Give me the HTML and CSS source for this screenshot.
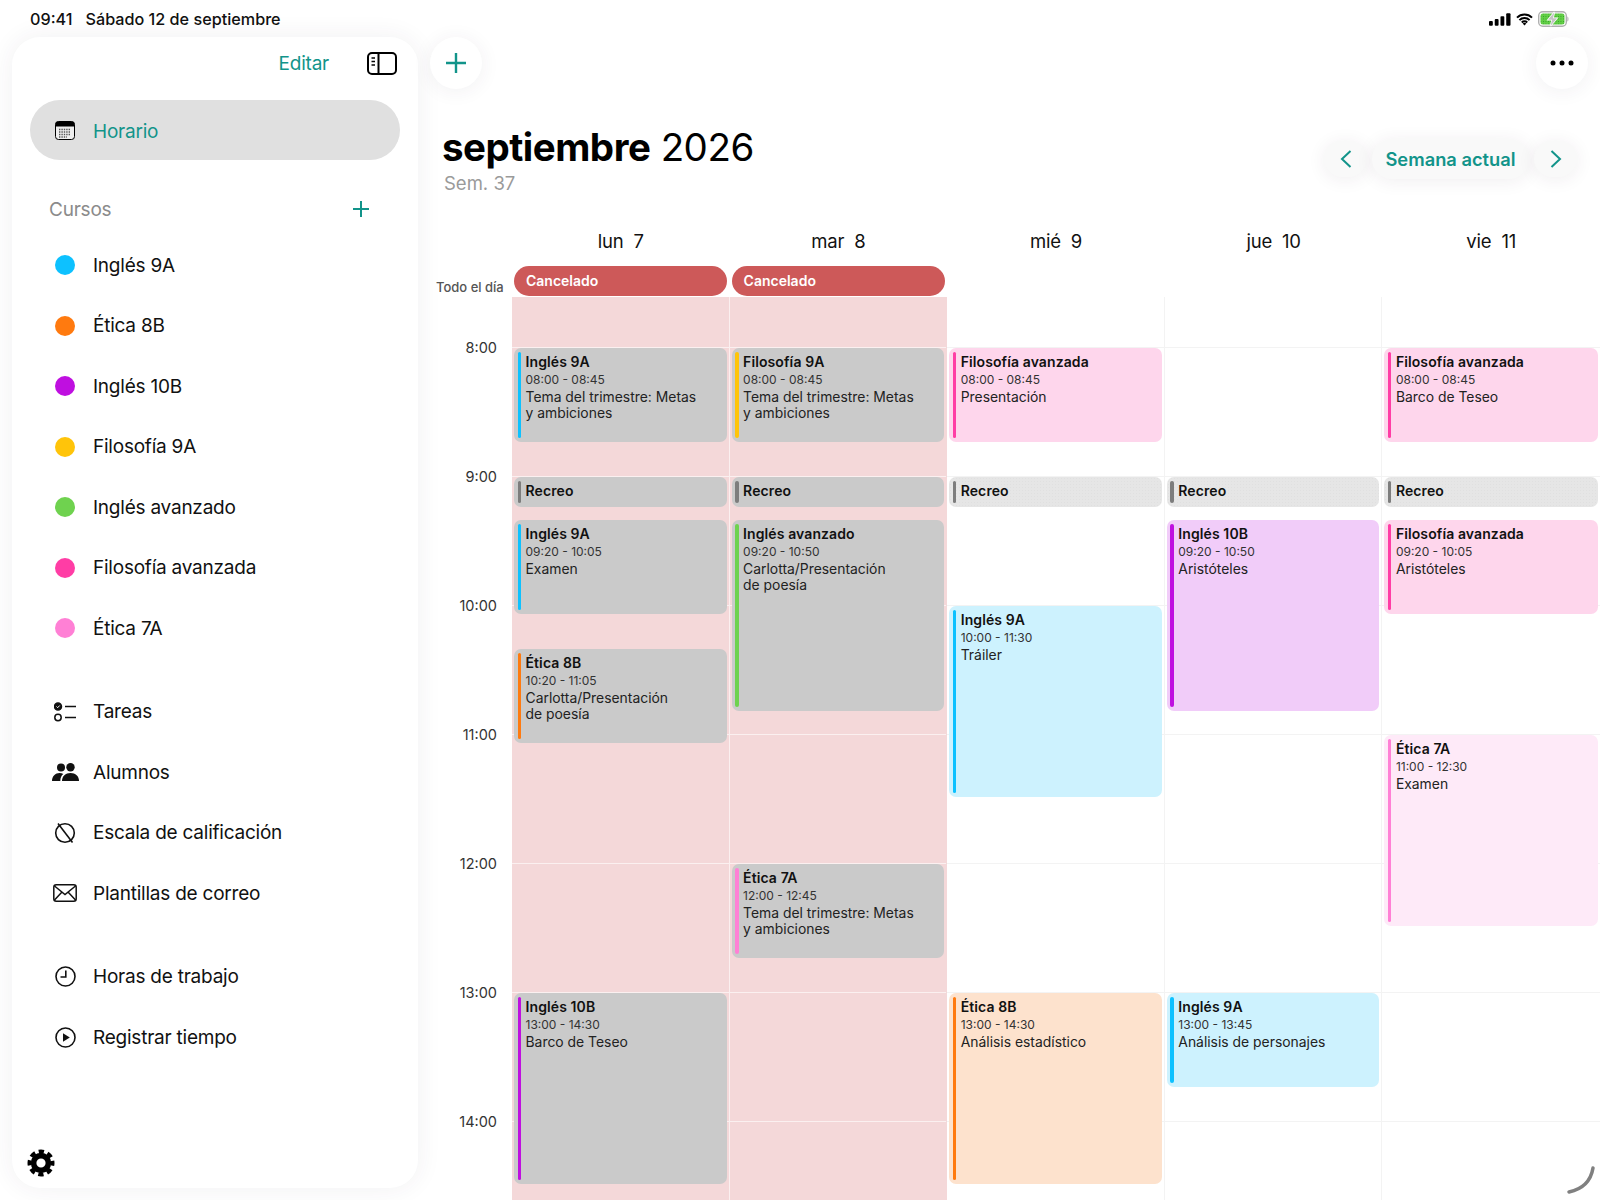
FILE: index.html
```html
<!DOCTYPE html>
<html lang="es">
<head>
    <meta charset="UTF-8">
    <meta name="viewport" content="width=device-width, initial-scale=1.0">
    <title>Horario</title>
    <link rel="stylesheet" href="styles.css">
</head>
<body>
    <div class="status-bar">
        <span class="clock">09:41</span>
        <span class="date">Sábado 12 de septiembre</span>
        <div class="status-icons">
            <svg width="22" height="13" viewBox="0 0 23 13"><rect x="0" y="8" width="4" height="5" rx="1"/><rect x="6" y="6" width="4" height="7" rx="1"/><rect x="12" y="3" width="4" height="10" rx="1"/><rect x="18" y="0" width="4.5" height="13" rx="1"/></svg>
            <svg width="17" height="13" viewBox="0 0 17 13"><path d="M1 4.6a10.6 10.6 0 0 1 15 0M3.4 7.1a7.2 7.2 0 0 1 10.2 0M5.8 9.5a3.8 3.8 0 0 1 5.4 0" fill="none" stroke="#000" stroke-width="2"/><path d="M6.7 10.6a2.5 2.5 0 0 1 3.6 0L8.5 12.6z"/></svg>
            <svg width="32" height="16" viewBox="0 0 32 16">
                <pattern id="cells" width="2.5" height="2.5" patternUnits="userSpaceOnUse"><rect width="2.5" height="2.5" fill="#62cf45"/><rect width="0.9" height="0.9" fill="#2f9a2a"/></pattern>
                <rect x="0.7" y="0.7" width="27.6" height="14.6" rx="4" fill="#fff" stroke="#b0b0b0" stroke-width="1.4"/>
                <rect x="2.5" y="2.5" width="24" height="11" rx="2.5" fill="url(#cells)"/>
                <path d="M29.5 5.5c1.2.4 1.2 4.600 0 5z" fill="#999"/>
                <path d="M16.500 1 10 8.800h4l-1.500 6.200 6.500-7.800h-4z" fill="#c4c4c4" stroke="#fff" stroke-width="1.400" paint-order="stroke"/>
            </svg>
        </div>
    </div>

    <div class="app">
        <aside class="sidebar">
            <div class="side-top">
                <span class="edit">Editar</span>
                <svg width="30" height="23" viewBox="0 0 30 23" fill="none" stroke="#000" stroke-width="2"><rect x="1" y="1" width="28" height="21" rx="4"/><path d="M11.500 1v21"/><path d="M4.500 6h3.500M4.500 9.500h3.500M4.500 13h3.500" stroke-width="1.500"/></svg>
            </div>

            <div class="nav-pill">
                <span class="slot">
                    <svg width="20" height="19" viewBox="0 0 20 19"><rect x="0.500" y="0.500" width="19" height="18" rx="3" fill="#eee" stroke="#000"/><path d="M3 0.500h14a2.500 2.500 0 0 1 2.500 2.500v2.500H0.500V3A2.500 2.500 0 0 1 3 0.500z"/><path d="M4 8.500h12M4 11h12M4 13.500h12M4 16h8" stroke="#555" stroke-width="1.400" stroke-dasharray="1.400 1"/></svg>
                </span>
                <span>Horario</span>
            </div>

            <div class="section-head">
                <span>Cursos</span>
                <svg width="18" height="18" viewBox="0 0 18 18" stroke="#12948a" stroke-width="2"><path d="M9 1v16M1 9h16"/></svg>
            </div>

            <ul class="side-list">
                <li><span class="slot"><i class="dot c-ing9a"></i></span>Inglés 9A</li>
                <li><span class="slot"><i class="dot c-eti8b"></i></span>Ética 8B</li>
                <li><span class="slot"><i class="dot c-ing10b"></i></span>Inglés 10B</li>
                <li><span class="slot"><i class="dot c-fil9a"></i></span>Filosofía 9A</li>
                <li><span class="slot"><i class="dot c-ingav"></i></span>Inglés avanzado</li>
                <li><span class="slot"><i class="dot c-filav"></i></span>Filosofía avanzada</li>
                <li><span class="slot"><i class="dot c-eti7a"></i></span>Ética 7A</li>
            </ul>

            <ul class="side-list spaced">
                <li>
                    <span class="slot">
                        <svg width="23" height="20" viewBox="0 0 23 20" fill="none" stroke="#111" stroke-width="1.500"><circle cx="4" cy="4.500" r="3.500" fill="#111"/><path d="M2.500 4.500l1.200 1.200 2-2.200" stroke="#fff" stroke-width="1"/><circle cx="4" cy="15.500" r="3.200"/><path d="M11 4.500h11M11 15.500h11"/></svg>
                    </span>Tareas
                </li>
                <li>
                    <span class="slot">
                        <svg width="27" height="18" viewBox="0 0 27 18" fill="#111"><circle cx="9" cy="4.500" r="4"/><circle cx="18.500" cy="4.200" r="4.200"/><path d="M0 18c0-5 3.500-8 7.500-8 1.500 0 2.800.4 3.800 1-2 1.500-3 4-3 7z"/><path d="M10 18c0-5 3.500-8 8.500-8s8.500 3 8.500 8z"/></svg>
                    </span>Alumnos
                </li>
                <li>
                    <span class="slot">
                        <svg width="22" height="22" viewBox="0 0 22 22" fill="none" stroke="#111" stroke-width="1.600"><circle cx="11" cy="11" r="9.300"/><path d="M4 1.500l14.500 19"/></svg>
                    </span>Escala de calificación
                </li>
                <li>
                    <span class="slot">
                        <svg width="24" height="18" viewBox="0 0 24 18" fill="none" stroke="#111" stroke-width="1.500"><rect x="0.800" y="0.800" width="22.400" height="16.400" rx="2.500"/><path d="M1.500 2l10.500 8.500L22.500 2M1.500 16l7.500-8M22.500 16l-7.500-8"/></svg>
                    </span>Plantillas de correo
                </li>
            </ul>

            <ul class="side-list spaced">
                <li>
                    <span class="slot">
                        <svg width="21" height="21" viewBox="0 0 21 21" fill="none" stroke="#111" stroke-width="1.600"><circle cx="10.500" cy="10.500" r="9.500"/><path d="M10.800 4.500v6.500H5.500"/></svg>
                    </span>Horas de trabajo
                </li>
                <li>
                    <span class="slot">
                        <svg width="21" height="21" viewBox="0 0 21 21" fill="none" stroke="#111" stroke-width="1.600"><circle cx="10.500" cy="10.500" r="9.500"/><path d="M8 6.300l6.800 4.200L8 14.700z" fill="#111" stroke="none"/></svg>
                    </span>Registrar tiempo
                </li>
            </ul>

            <svg class="gear" width="28" height="28" viewBox="0 0 28 28" fill="none" stroke="#000"><circle cx="14" cy="14" r="7.400" stroke-width="5.600"/><circle cx="14" cy="14" r="11.500" stroke-width="4" stroke-dasharray="5.300 3.730" stroke-dashoffset="2.650"/></svg>
        </aside>

        <main class="main">
            <div class="toolbar">
                <button class="round-btn">
                    <svg width="22" height="22" viewBox="0 0 22 22" stroke="#12948a" stroke-width="2.400"><path d="M11 1v20M1 11h20"/></svg>
                </button>
                <button class="round-btn">
                    <svg width="24" height="6" viewBox="0 0 24 6" fill="#000"><circle cx="3" cy="3" r="2.500"/><circle cx="12" cy="3" r="2.500"/><circle cx="21" cy="3" r="2.500"/></svg>
                </button>
            </div>

            <header class="month-head">
                <div>
                    <h1><b>septiembre</b> 2026</h1>
                    <p class="week-no">Sem. 37</p>
                </div>
                <div class="week-nav">
                    <button class="arrow-btn"><svg width="12" height="18" viewBox="0 0 12 18" fill="none" stroke="#12948a" stroke-width="2"><path d="M10.500 1L2 9l8.500 8"/></svg></button>
                    <button class="week-btn">Semana actual</button>
                    <button class="arrow-btn"><svg width="12" height="18" viewBox="0 0 12 18" fill="none" stroke="#12948a" stroke-width="2"><path d="M1.500 1L10 9l-8.500 8"/></svg></button>
                </div>
            </header>

            <div class="week-head">
                <span></span>
                <span>lun&nbsp; 7</span>
                <span>mar&nbsp; 8</span>
                <span>mié&nbsp; 9</span>
                <span>jue&nbsp; 10</span>
                <span>vie&nbsp; 11</span>
            </div>

            <div class="all-day">
                <span class="all-day-label">Todo el día</span>
                <div class="all-day-cell"><span class="cancel-pill">Cancelado</span></div>
                <div class="all-day-cell"><span class="cancel-pill">Cancelado</span></div>
                <div class="all-day-cell"></div>
                <div class="all-day-cell"></div>
                <div class="all-day-cell"></div>
            </div>

            <div class="week-grid">
                <div class="hours">
                    <span>8:00</span><span>9:00</span><span>10:00</span><span>11:00</span><span>12:00</span><span>13:00</span><span>14:00</span>
                </div>

                <div class="day cancelled">
                    <div class="slots">
                        <div class="ev c-ing9a" style="grid-row: 1 / 10"><b>Inglés 9A</b><small>08:00 - 08:45</small><p>Tema del trimestre: Metas<br>y ambiciones</p></div>
                        <div class="ev break" style="grid-row: 13 / 16"><b>Recreo</b></div>
                        <div class="ev c-ing9a" style="grid-row: 17 / 26"><b>Inglés 9A</b><small>09:20 - 10:05</small><p>Examen</p></div>
                        <div class="ev c-eti8b" style="grid-row: 29 / 38"><b>Ética 8B</b><small>10:20 - 11:05</small><p>Carlotta/Presentación<br>de poesía</p></div>
                        <div class="ev c-ing10b" style="grid-row: 61 / 79"><b>Inglés 10B</b><small>13:00 - 14:30</small><p>Barco de Teseo</p></div>
                    </div>
                </div>

                <div class="day cancelled">
                    <div class="slots">
                        <div class="ev c-fil9a" style="grid-row: 1 / 10"><b>Filosofía 9A</b><small>08:00 - 08:45</small><p>Tema del trimestre: Metas<br>y ambiciones</p></div>
                        <div class="ev break" style="grid-row: 13 / 16"><b>Recreo</b></div>
                        <div class="ev c-ingav" style="grid-row: 17 / 35"><b>Inglés avanzado</b><small>09:20 - 10:50</small><p>Carlotta/Presentación<br>de poesía</p></div>
                        <div class="ev c-eti7a" style="grid-row: 49 / 58"><b>Ética 7A</b><small>12:00 - 12:45</small><p>Tema del trimestre: Metas<br>y ambiciones</p></div>
                    </div>
                </div>

                <div class="day">
                    <div class="slots">
                        <div class="ev c-filav" style="grid-row: 1 / 10"><b>Filosofía avanzada</b><small>08:00 - 08:45</small><p>Presentación</p></div>
                        <div class="ev break" style="grid-row: 13 / 16"><b>Recreo</b></div>
                        <div class="ev c-ing9a" style="grid-row: 25 / 43"><b>Inglés 9A</b><small>10:00 - 11:30</small><p>Tráiler</p></div>
                        <div class="ev c-eti8b" style="grid-row: 61 / 79"><b>Ética 8B</b><small>13:00 - 14:30</small><p>Análisis estadístico</p></div>
                    </div>
                </div>

                <div class="day">
                    <div class="slots">
                        <div class="ev break" style="grid-row: 13 / 16"><b>Recreo</b></div>
                        <div class="ev c-ing10b" style="grid-row: 17 / 35"><b>Inglés 10B</b><small>09:20 - 10:50</small><p>Aristóteles</p></div>
                        <div class="ev c-ing9a" style="grid-row: 61 / 70"><b>Inglés 9A</b><small>13:00 - 13:45</small><p>Análisis de personajes</p></div>
                    </div>
                </div>

                <div class="day">
                    <div class="slots">
                        <div class="ev c-filav" style="grid-row: 1 / 10"><b>Filosofía avanzada</b><small>08:00 - 08:45</small><p>Barco de Teseo</p></div>
                        <div class="ev break" style="grid-row: 13 / 16"><b>Recreo</b></div>
                        <div class="ev c-filav" style="grid-row: 17 / 26"><b>Filosofía avanzada</b><small>09:20 - 10:05</small><p>Aristóteles</p></div>
                        <div class="ev c-eti7a" style="grid-row: 37 / 55"><b>Ética 7A</b><small>11:00 - 12:30</small><p>Examen</p></div>
                    </div>
                </div>
            </div>
        </main>
    </div>

    <svg class="corner" width="32" height="30" viewBox="0 0 32 30" fill="none" stroke="#808080" stroke-width="3.500" stroke-linecap="round"><path d="M28 3C26 15 18 24 4 27"/></svg>
</body>
</html>
```

FILE: styles.css
```css
* {
    box-sizing: border-box;
}

html, body {
    height: 100%;
}

body {
    margin: 0;
    height: 1200px;
    overflow: hidden;
    position: relative;
    display: flex;
    flex-direction: column;
    background: #fff;
    color: #111;
    font-family: Inter, "Liberation Sans", sans-serif;
}

button {
    border: none;
    font-family: inherit;
    padding: 0;
}

/* colores de los cursos */
.c-ing9a { --accent: #0dc1ff; --tint: #cdf2fe; }
.c-eti8b { --accent: #ff7a0f; --tint: #fde2cd; }
.c-ing10b { --accent: #bf0fe0; --tint: #f1ccf9; }
.c-fil9a { --accent: #ffc40a; --tint: #fff0c4; }
.c-ingav { --accent: #6fd24f; --tint: #dcf4d4; }
.c-filav { --accent: #ff3da5; --tint: #fed6ec; }
.c-eti7a { --accent: #ff80d5; --tint: #feeaf8; }

.status-bar {
    height: 37px;
    flex: none;
    display: flex;
    align-items: center;
    padding: 1px 30px 0;
    font-size: 16.2px;
    font-weight: 500;
}

.date {
    margin-left: 13px;
}

.status-icons {
    margin-left: auto;
    display: flex;
    align-items: center;
    gap: 5px;
}

.app {
    flex: 1;
    display: flex;
    min-height: 0;
}

/* barra lateral */
.sidebar {
    width: 406px;
    flex: none;
    margin: 0 12px 12px;
    border-radius: 28px;
    background: #fff;
    box-shadow: 0 0 26px rgba(60, 40, 70, 0.07);
    display: flex;
    flex-direction: column;
    font-size: 19px;
    letter-spacing: -0.23px;
}

.side-top {
    height: 52px;
    flex: none;
    display: flex;
    align-items: center;
    justify-content: flex-end;
    gap: 38px;
    padding-right: 21px;
}

.edit {
    color: #12948a;
}

.nav-pill {
    height: 60px;
    flex: none;
    margin: 11px 18px 0;
    padding-left: 20px;
    border-radius: 30px;
    background: #e0e0e0;
    color: #12948a;
    display: flex;
    align-items: center;
    gap: 13px;
}

.nav-pill span:last-child {
    padding-top: 2px;
}

.slot {
    width: 30px;
    flex: none;
    display: flex;
    align-items: center;
    justify-content: center;
}

.section-head {
    height: 30px;
    flex: none;
    margin-top: 34px;
    margin-bottom: 1px;
    padding: 0 48px 0 37px;
    display: flex;
    align-items: center;
    justify-content: space-between;
    color: #8b8b8b;
}

.side-list {
    list-style: none;
    margin: 10px 0 0;
    padding: 0;
}

.side-list.spaced {
    margin-top: 23px;
}

.side-list li {
    height: 60.5px;
    padding-left: 38px;
    display: flex;
    align-items: center;
    gap: 13px;
}

.dot {
    width: 20px;
    height: 20px;
    border-radius: 50%;
    background: var(--accent);
}

.gear {
    margin: auto 0 11px 15px;
}

/* zona principal */
.main {
    flex: 1;
    min-width: 0;
    display: flex;
    flex-direction: column;
}

.toolbar {
    height: 52px;
    flex: none;
    display: flex;
    justify-content: space-between;
    padding-right: 12px;
}

.round-btn {
    width: 52px;
    height: 52px;
    border-radius: 50%;
    background: #fff;
    box-shadow: 0 2px 20px rgba(60, 40, 70, 0.07);
    display: flex;
    align-items: center;
    justify-content: center;
}

.month-head {
    height: 136px;
    flex: none;
    padding: 34px 23px 0 12px;
    display: flex;
    justify-content: space-between;
}

h1 {
    margin: 0;
    color: #000;
    font-size: 38.5px;
    font-weight: 400;
    line-height: 48px;
    letter-spacing: -0.5px;
}

h1 b {
    font-weight: 700;
}

.week-no {
    margin: 0 0 0 2px;
    color: #9a9a9a;
    font-size: 18.5px;
    line-height: 24px;
}

.week-nav {
    margin-top: 16px;
    height: 40px;
    display: flex;
    align-items: center;
    gap: 5px;
}

.arrow-btn {
    width: 43px;
    height: 36px;
    border-radius: 18px;
    background: #f9f9f9;
    box-shadow: 0 2px 18px rgba(60, 40, 70, 0.08);
    display: flex;
    align-items: center;
    justify-content: center;
}

.week-btn {
    width: 157px;
    height: 40px;
    border-radius: 20px;
    background: #f9f9f9;
    box-shadow: 0 2px 18px rgba(60, 40, 70, 0.08);
    color: #12948a;
    font-size: 18.3px;
    font-weight: 600;
}

/* calendario */
.week-head {
    height: 41px;
    flex: none;
    display: grid;
    grid-template-columns: 82px repeat(5, 1fr);
    font-size: 18.5px;
    letter-spacing: -0.2px;
    text-align: center;
    line-height: 33px;
}

.all-day {
    height: 30px;
    flex: none;
    display: grid;
    grid-template-columns: 82px repeat(5, 1fr);
}

.all-day-label {
    padding-top: 13px;
    padding-left: 6px;
    font-size: 13px;
    font-weight: 500;
    color: #555;
    white-space: nowrap;
}

.all-day-cell {
    padding: 0 2.500px 0 2px;
}

.cancel-pill {
    display: block;
    height: 30px;
    padding-left: 12px;
    border-radius: 15px;
    background: #cd5959;
    color: #fff;
    font-size: 14px;
    font-weight: 600;
    line-height: 29.500px;
}

.week-grid {
    flex: 1;
    min-height: 0;
    margin-top: 1px;
    display: grid;
    grid-template-columns: 82px repeat(5, 1fr);
    overflow: hidden;
}

.hours {
    padding: 40.500px 15px 0 0;
    display: flex;
    flex-direction: column;
    align-items: flex-end;
    font-size: 14.5px;
    color: #333;
}

.hours span {
    height: 129px;
    flex: none;
    line-height: 20px;
}

.day {
    --line: #f3f3f3;
    padding-top: 50px;
    border-right: 1.500px solid var(--line);
    background-image: linear-gradient(to bottom, var(--line) 1.500px, transparent 1.500px);
    background-size: 100% 129px;
    background-position: 0 50px;
}

.day:last-child {
    border-right: none;
}

.day.cancelled {
    --line: #fbf0f0;
    background-color: #f4d8d9;
}

.day.cancelled:not(:has(+ .cancelled)) {
    border-right-color: #f4d8d9;
}

.slots {
    display: grid;
    grid-template-rows: repeat(84, 10.75px);
    grid-template-columns: 1fr;
}

.ev {
    margin: 1px 2px 1.500px 2px;
    padding: 4.500px 8px 0 11.500px;
    border-radius: 7px;
    background: var(--tint);
    position: relative;
    overflow: hidden;
    font-size: 13.9px;
    line-height: 16.500px;
    color: #222;
}

.ev::before {
    content: "";
    position: absolute;
    left: 3.500px;
    top: 4px;
    bottom: 4px;
    width: 3.500px;
    border-radius: 2px;
    background: var(--accent);
}

.ev b {
    display: block;
    font-size: 14px;
    font-weight: 600;
    letter-spacing: 0.1px;
    color: #111;
    line-height: 18px;
}

.ev small {
    display: block;
    font-size: 12px;
    line-height: 17px;
    color: #333;
}

.ev p {
    margin: 1px 0 0;
}

.ev.break {
    --accent: #7d7d7d;
    --tint: #e6e6e6;
    background-image: radial-gradient(#e0e0e0 0.6px, transparent 0.7px);
    background-size: 3px 3px;
}

.cancelled .ev {
    background: #cacaca;
}

.corner {
    position: absolute;
    right: 3px;
    bottom: 5px;
}
```
